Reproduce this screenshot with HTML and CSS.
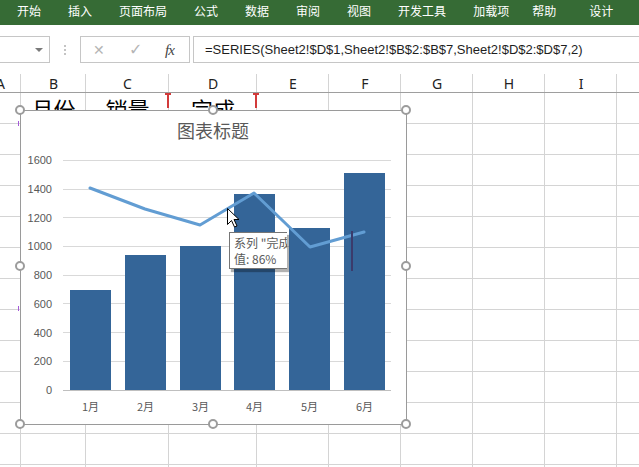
FILE: index.html
```html
<!DOCTYPE html>
<html>
<head>
<meta charset="utf-8">
<link rel="stylesheet" href="styles.css">
</head>
<body>
<div class="ribbon">
  <span>开始</span><span>插入</span><span>页面布局</span><span>公式</span><span>数据</span><span>审阅</span><span>视图</span><span>开发工具</span><span>加载项</span><span class="t-help">帮助</span><span class="t-design">设计</span>
</div>

<div class="fbar">
  <div class="namebox"><span class="caret"></span></div>
  <div class="dots"><i></i><i></i><i></i></div>
  <div class="fxbox">
    <span class="fx-x">✕</span>
    <span class="fx-ok">✓</span>
    <span class="fx-f">fx</span>
  </div>
  <div class="formula">=SERIES(Sheet2!$D$1,Sheet2!$B$2:$B$7,Sheet2!$D$2:$D$7,2)</div>
</div>

<div class="sheet">
  <div class="col col-a"><div class="hdr">A</div><div class="cells"></div></div>
  <div class="col col-b"><div class="hdr">B</div><div class="cells"><div class="big">月份</div></div></div>
  <div class="col col-c"><div class="hdr">C</div><div class="cells"><div class="big">销量</div></div></div>
  <div class="col col-d"><div class="hdr">D</div><div class="cells"><div class="big">完成</div></div></div>
  <div class="col"><div class="hdr">E</div><div class="cells"></div></div>
  <div class="col"><div class="hdr">F</div><div class="cells"></div></div>
  <div class="col"><div class="hdr">G</div><div class="cells"></div></div>
  <div class="col"><div class="hdr">H</div><div class="cells"></div></div>
  <div class="col"><div class="hdr">I</div><div class="cells"></div></div>
  <div class="col"><div class="hdr">J</div><div class="cells"></div></div>
</div>

<span class="mark mark-1"></span>
<span class="mark mark-2"></span>
<span class="pmark pmark-1"></span>
<span class="pmark pmark-2"></span>

<div class="chart">
  <svg class="plot" width="385" height="313" viewBox="21 111 385 313">
    <text class="title" x="213" y="138" text-anchor="middle">图表标题</text>
    <g stroke="#d9d9d9" stroke-width="1">
      <line x1="63" x2="391" y1="160.5" y2="160.5"/>
      <line x1="63" x2="391" y1="189.5" y2="189.5"/>
      <line x1="63" x2="391" y1="217.5" y2="217.5"/>
      <line x1="63" x2="391" y1="246.5" y2="246.5"/>
      <line x1="63" x2="391" y1="275.5" y2="275.5"/>
      <line x1="63" x2="391" y1="303.5" y2="303.5"/>
      <line x1="63" x2="391" y1="332.5" y2="332.5"/>
      <line x1="63" x2="391" y1="361.5" y2="361.5"/>
    </g>
    <g class="ylab" text-anchor="end">
      <text x="52" y="164">1600</text>
      <text x="52" y="193">1400</text>
      <text x="52" y="222">1200</text>
      <text x="52" y="250">1000</text>
      <text x="52" y="279">800</text>
      <text x="52" y="308">600</text>
      <text x="52" y="337">400</text>
      <text x="52" y="365">200</text>
      <text x="52" y="394">0</text>
    </g>
    <g fill="#346598">
      <rect x="70" y="290" width="41" height="100"/>
      <rect x="125" y="255" width="41" height="135"/>
      <rect x="180" y="246" width="41" height="144"/>
      <rect x="234" y="194" width="41" height="196"/>
      <rect x="289" y="228" width="41" height="162"/>
      <rect x="344" y="173" width="41" height="217"/>
    </g>
    <line x1="63" x2="391" y1="390.5" y2="390.5" stroke="#bfbfbf" stroke-width="1"/>
    <g class="xlab" text-anchor="middle">
      <text x="90.5" y="411">1月</text>
      <text x="145.5" y="411">2月</text>
      <text x="200.5" y="411">3月</text>
      <text x="254.5" y="411">4月</text>
      <text x="309.5" y="411">5月</text>
      <text x="364.5" y="411">6月</text>
    </g>
    <polyline points="90,188 145,209 200,225 254,193 310,247 364,232" fill="none" stroke="#629dd3" stroke-width="3" stroke-linejoin="round" stroke-linecap="round"/>
    <line x1="352" x2="352" y1="231" y2="271" stroke="#3b3b6c" stroke-width="2"/>
  </svg>
  <span class="handle h-tl"></span>
  <span class="handle h-tm"></span>
  <span class="handle h-tr"></span>
  <span class="handle h-ml"></span>
  <span class="handle h-mr"></span>
  <span class="handle h-bl"></span>
  <span class="handle h-bm"></span>
  <span class="handle h-br"></span>
</div>

<div class="tip">
  <div>系列 "完成"</div>
  <div>值: 86%</div>
</div>

<svg class="cursor" width="14" height="20" viewBox="0 0 14 20">
  <path d="M0.5 0.5 L0.5 16.5 L4.5 12.5 L7.5 19 L10 18 L7 11.5 L12 11.5 Z" fill="#fff" stroke="#000" stroke-width="1" stroke-linejoin="miter"/>
</svg>
</body>
</html>
```

FILE: styles.css
```css
html, body {
  margin: 0;
  padding: 0;
}
body {
  width: 639px;
  height: 467px;
  overflow: hidden;
  position: relative;
  background: #ffffff;
  font-family: "Noto Sans CJK SC", "Noto Sans", sans-serif;
  color: #222;
}

/* ribbon */
.ribbon {
  height: 25px;
  box-sizing: border-box;
  background: #366b35;
  color: #ffffff;
  display: flex;
  align-items: center;
  gap: 27px;
  padding: 0 0 4px 17px;
  font-size: 12px;
  line-height: 1;
  white-space: nowrap;
}
.ribbon .t-help { margin-left: -4px; }
.ribbon .t-design { margin-left: 6px; }

/* formula bar */
.fbar {
  margin-top: 11px;
  height: 27px;
  display: flex;
}
.namebox {
  width: 51px;
  margin-left: -1px;
  box-sizing: border-box;
  border: 1px solid #c6c6c6;
  display: flex;
  align-items: center;
  justify-content: flex-end;
  padding-right: 6px;
}
.caret {
  width: 0;
  height: 0;
  border-left: 4px solid transparent;
  border-right: 4px solid transparent;
  border-top: 4px solid #7a7a7a;
}
.dots {
  width: 30px;
  display: flex;
  flex-direction: column;
  align-items: center;
  justify-content: center;
  gap: 2px;
}
.dots i {
  display: block;
  width: 2px;
  height: 2px;
  background: #c4c4c4;
}
.fxbox {
  width: 110px;
  box-sizing: border-box;
  border: 1px solid #c6c6c6;
  position: relative;
  font-family: "DejaVu Sans", sans-serif;
}
.fxbox span {
  position: absolute;
  top: 4px;
  line-height: 18px;
}
.fx-x { left: 12px; font-size: 14px; color: #b5b5b5; }
.fx-ok { left: 48px; font-size: 16px; color: #b5b5b5; }
.fx-f {
  left: 84px;
  font-family: "Liberation Serif", "DejaVu Serif", serif;
  font-style: italic;
  font-size: 15px;
  color: #444;
  letter-spacing: -1px;
}
.formula {
  flex: 1;
  margin-left: 3px;
  box-sizing: border-box;
  border: 1px solid #c6c6c6;
  border-right: none;
  padding-left: 11px;
  font-family: "Liberation Sans", Arial, sans-serif;
  font-size: 13px;
  line-height: 25px;
  color: #1e1e1e;
  white-space: nowrap;
  overflow: hidden;
}

/* sheet */
.sheet {
  margin-top: 11px;
  margin-left: -20px;
  display: flex;
}
.col {
  width: 72px;
  flex-shrink: 0;
  box-sizing: border-box;
  border-right: 1px solid #d4d4d4;
}
.col-a { width: 41px; }
.col-b { width: 65px; }
.col-c { width: 83px; }
.col-d { width: 88px; }
.hdr {
  height: 18px;
  border-bottom: 1px solid #9e9e9e;
  margin-right: -1px;
  text-align: center;
  font-family: "Noto Sans", sans-serif;
  font-size: 14px;
  line-height: 20px;
  color: #222;
  overflow: hidden;
}
.cells {
  height: 380px;
  margin-right: -1px;
  background: repeating-linear-gradient(to bottom, transparent 0, transparent 30px, #d4d4d4 30px, #d4d4d4 31px);
}
.big {
  height: 30px;
  text-align: center;
  font-size: 22px;
  line-height: 30px;
  color: #000;
}

/* range markers */
.mark {
  position: absolute;
  top: 93px;
  width: 2px;
  height: 15px;
  background: #d23a3a;
}
.mark::before {
  content: "";
  position: absolute;
  left: -2px;
  top: 0;
  width: 6px;
  height: 2px;
  background: #d23a3a;
}
.mark-1 { left: 167px; }
.mark-2 { left: 255px; }
.pmark {
  position: absolute;
  left: 18px;
  width: 1px;
  background: #a45ad8;
}
.pmark-1 { top: 121px; height: 5px; }
.pmark-2 { top: 306px; height: 5px; }

/* chart */
.chart {
  position: absolute;
  left: 20px;
  top: 110px;
  width: 387px;
  height: 315px;
  box-sizing: border-box;
  border: 1px solid #9a9a9a;
  background: #ffffff;
}
.plot {
  display: block;
}
.title {
  font-family: "Noto Sans CJK SC", sans-serif;
  font-size: 18px;
  fill: #595959;
}
.ylab text {
  font-family: "Liberation Sans", Arial, sans-serif;
  font-size: 11px;
  fill: #595959;
}
.xlab text {
  font-family: "Noto Sans CJK SC", sans-serif;
  font-size: 11px;
  fill: #595959;
}
.handle {
  position: absolute;
  width: 10px;
  height: 10px;
  box-sizing: border-box;
  border: 2px solid #9c9c9c;
  border-radius: 50%;
  background: #ffffff;
}
.h-tl { left: -6px; top: -6px; }
.h-tm { left: 187px; top: -6px; }
.h-tr { left: 380px; top: -6px; }
.h-ml { left: -6px; top: 150px; }
.h-mr { left: 380px; top: 150px; }
.h-bl { left: -6px; top: 308px; }
.h-bm { left: 187px; top: 308px; }
.h-br { left: 380px; top: 308px; }

/* tooltip */
.tip {
  position: absolute;
  left: 229px;
  top: 232px;
  width: 58px;
  height: 37px;
  box-sizing: border-box;
  border: 1px solid #767676;
  border-right: none;
  background: #ffffff;
  padding: 2px 0 0 4px;
  font-size: 12px;
  line-height: 16px;
  color: #595959;
  white-space: nowrap;
  overflow: hidden;
  box-shadow: 2px 3px 1px rgba(0, 0, 0, 0.3);
}

.cursor {
  position: absolute;
  left: 227px;
  top: 208px;
}
```
